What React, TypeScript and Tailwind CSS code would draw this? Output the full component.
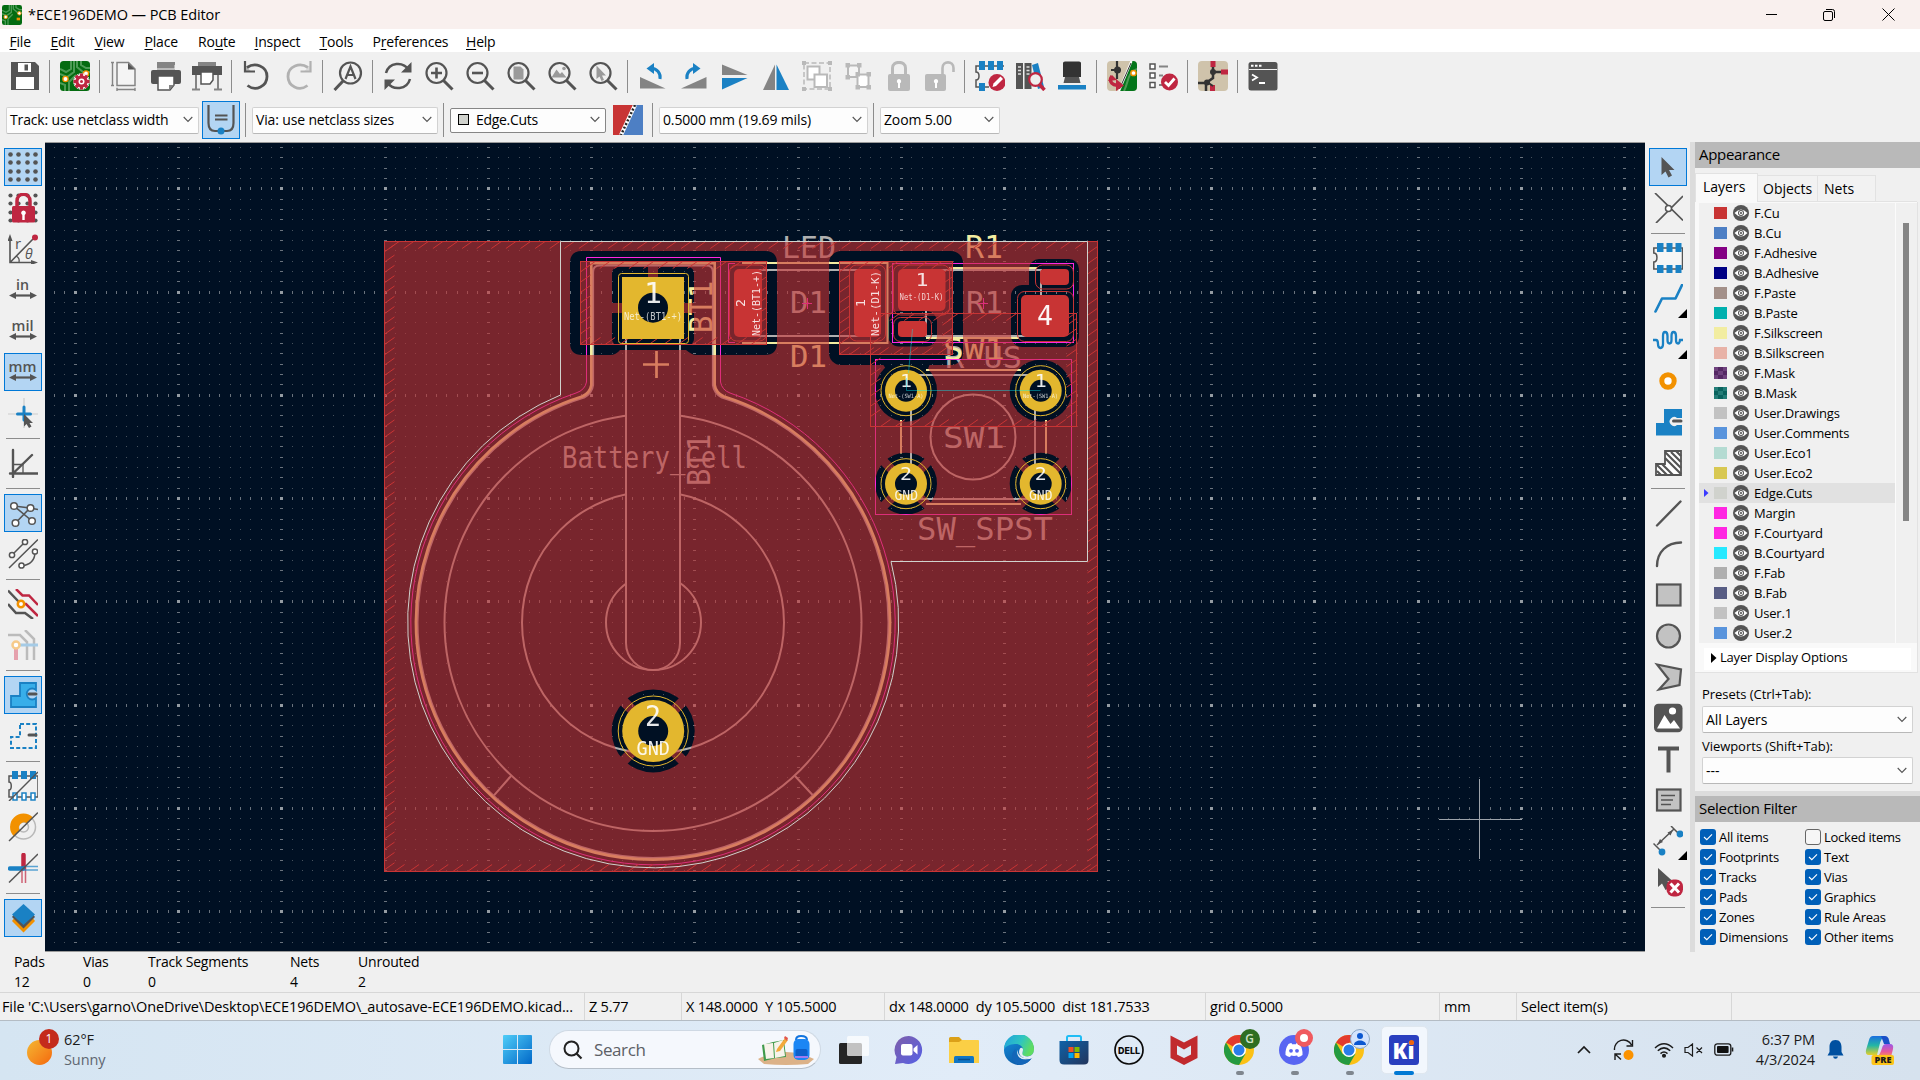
import React from "react";

const G = "#545454";
const B = "#1a81c4";
const R = "#bf2641";
const O = "#f29100";

/* ---------- shared pieces ---------- */

function Ico({ children, dim }: { children: React.ReactNode; dim?: boolean }) {
  return (
    <svg width="30" height="30" viewBox="0 0 30 30" fill="none" className={dim ? "block opacity-40" : "block"}>
      {children}
    </svg>
  );
}

function Chevron() {
  return (
    <svg width="10" height="7" viewBox="0 0 10 7" fill="none" className="shrink-0">
      <path d="M.7 1 5 5.4 9.3 1" stroke="#555" strokeWidth="1.1" />
    </svg>
  );
}

function PcbTile() {
  return (
    <g>
      <rect x="0" y="0" width="30" height="30" rx="3.5" fill="#046b10" />
      <path d="M0 8 6 11 11 8V0M0 13 7 16 14 11V0M17 0V6L23 11H30M21 0V4L26 7H30M0 22 5 24V30M9 30V21L16 14" stroke="#4d9b55" strokeWidth="2" fill="none" />
      <circle cx="5.5" cy="18" r="2.6" fill="#fff" stroke={O} strokeWidth="1.4" />
      <circle cx="26" cy="12.5" r="2.6" fill="#fff" stroke={O} strokeWidth="1.4" />
    </g>
  );
}

function Magnifier({ children }: { children?: React.ReactNode }) {
  return (
    <Ico>
      <circle cx="12.5" cy="12" r="10" stroke={G} strokeWidth="2.2" />
      <path d="m19.5 19.5 9 9" stroke={G} strokeWidth="3" />
      {children}
    </Ico>
  );
}

/* ---------- top toolbar icons ---------- */

const topIcons: (React.ReactNode | null)[] = [
  <Ico>
    <path d="M1 1H25L29 5V29H1Z" fill={G} />
    <rect x="7" y="1" width="15" height="11" fill="#f0f0f0" />
    <rect x="7.5" y="1.5" width="14" height="10" fill="#fff" stroke={G} />
    <rect x="14.5" y="3.5" width="3.5" height="6" fill={G} />
    <rect x="6" y="16" width="18" height="12" fill="#fff" />
  </Ico>,
  null,
  <Ico>
    <PcbTile />
    <path d="M21.5 12.5v16M13.5 20.5h16M15.8 14.8l11.4 11.4M27.2 14.8 15.8 26.2" stroke="#fff" strokeWidth="5.4" />
    <path d="M21.5 12.5v16M13.5 20.5h16M15.8 14.8l11.4 11.4M27.2 14.8 15.8 26.2" stroke={R} strokeWidth="3.4" />
    <circle cx="21.5" cy="20.5" r="6" fill={R} />
    <circle cx="21.5" cy="20.5" r="3" fill="#fff" />
    <circle cx="21.5" cy="20.5" r="1.5" fill={R} />
  </Ico>,
  null,
  <Ico>
    <path d="M7 1.5H18.5L25 8V24.5H7Z" fill="#f4f4f4" stroke="#848484" strokeWidth="1.5" />
    <path d="M18 2V8.5H25Z" fill={G} />
    <path d="M1 1.5H4M1 24.5H4M2.5 2V24M7 28.5H25M7 26.8V30M25 26.8V30" stroke="#848484" strokeWidth="1.4" />
  </Ico>,
  <Ico>
    <rect x="6" y="1" width="18" height="9" fill="#848484" />
    <path d="M6 8H24V4" stroke="#f0f0f0" strokeWidth="1" />
    <rect x="0" y="9" width="30" height="14" rx="2" fill={G} />
    <path d="M7 15H23V24L19 29H7Z" fill="#fff" stroke={G} strokeWidth="1.5" />
    <path d="M18 29V24H23Z" fill="#848484" />
  </Ico>,
  <Ico>
    <rect x="6" y="1" width="18" height="5" fill="#848484" />
    <rect x="0" y="5" width="30" height="9" fill={G} />
    <path d="M9 11H21V19L18 23H9Z" fill="#fff" stroke={G} strokeWidth="1.5" />
    <path d="M4 14V28M26 14V28M0 28.5H8M22 28.5H30" stroke="#848484" strokeWidth="2" />
  </Ico>,
  null,
  <Ico>
    <path d="M5 6.5C13 1 25 5 25 15.500C25 25 14 31 5.500 24.500" stroke={G} strokeWidth="2.800" />
    <path d="M3 0V10.500H13" stroke={G} strokeWidth="2.200" />
    <path d="M3 4V10.500H9Z" fill={G} opacity=".35" />
  </Ico>,
  <Ico dim>
    <path d="M25 6.5C17 1 5 5 5 15.500C5 25 16 31 24.500 24.500" stroke={G} strokeWidth="2.800" />
    <path d="M27.500 0V10.500H17.500" stroke={G} strokeWidth="2.200" />
    <path d="M27.500 4V10.500H21Z" fill={G} opacity=".35" />
  </Ico>,
  null,
  <Ico>
    <circle cx="17.500" cy="12" r="10.500" stroke={G} strokeWidth="2.200" />
    <path d="m10.500 19.500-9 9.500" stroke={G} strokeWidth="3" />
    <path d="M12.500 18 17.500 5.500 22.500 18M14.500 14H20.500" stroke={G} strokeWidth="2.200" />
  </Ico>,
  null,
  <Ico>
    <path d="M3 12C6 1 20 0 26 9M27 18C24 29 10 30 4 21" stroke={G} strokeWidth="2.500" />
    <path d="M28.500 1V11.500H18ZM1.500 29V18.500H12Z" fill={G} />
  </Ico>,
  <Magnifier>
    <path d="M12.500 6.500V17.500M7 12H18" stroke={G} strokeWidth="2.600" />
  </Magnifier>,
  <Magnifier>
    <path d="M7 12H18" stroke={G} strokeWidth="2.600" />
  </Magnifier>,
  <Magnifier>
    <path d="M7.500 5.500H14.500L17.500 8.500V18.500H7.500Z" fill="#9a9a9a" />
  </Magnifier>,
  <Magnifier>
    <path d="M4.500 16.500 9.500 8.500 13 13 15 11 19.500 16.500Z" fill="#9a9a9a" />
    <circle cx="17" cy="7.500" r="1.800" fill="#9a9a9a" />
  </Magnifier>,
  <Magnifier>
    <path d="M8.500 4.500V18L11.500 15.500 13.500 20 16 19 14 14.500H18Z" fill="#9a9a9a" />
  </Magnifier>,
  null,
  <Ico>
    <path d="M2 16V27.500H27.500Z" fill="#848484" />
    <path d="M22 18C23 12 19 7.500 13 7" stroke={B} strokeWidth="3" />
    <path d="M16 2V13L8.500 7.500Z" fill={B} />
  </Ico>,
  <Ico>
    <path d="M27.500 16V27.500H2Z" fill="#848484" />
    <path d="M8 18C7 12 11 7.500 17 7" stroke={B} strokeWidth="3" />
    <path d="M14 2V13L21.500 7.500Z" fill={B} />
  </Ico>,
  <Ico>
    <path d="M2 3.500V14H27.500Z" fill="#848484" />
    <path d="M2 28.500V17H27.500Z" fill={B} />
  </Ico>,
  <Ico>
    <path d="M14 3.500V29H2Z" fill="#848484" />
    <path d="M15.500 3.500V29H28Z" fill={B} />
  </Ico>,
  <Ico>
    <g stroke="#b9b9b9">
      <path d="M2 2H28V28H2Z" strokeWidth="1.500" strokeDasharray="5 2.500" />
      <path d="M5.500 5.500H17.500V18.500H5.500Z" fill="#fff" strokeWidth="2" />
      <path d="M12.500 13.500H25V26H12.500Z" fill="#fff" strokeWidth="2" />
    </g>
    <path d="M0 0H4V4H0ZM26 0H30V4H26ZM0 26H4V30H0ZM26 26H30V30H26Z" fill="#b9b9b9" />
  </Ico>,
  <Ico>
    <g stroke="#b9b9b9" strokeWidth="2">
      <path d="M5 4.500H16V16H5Z" fill="#f5f5f5" />
      <path d="M14.500 13.500H25.500V26H14.500Z" fill="#fff" />
    </g>
    <path d="M2.500 2H7V6.500H2.500ZM14 2H18.500V6.500H14ZM2.500 14H7V18.500H2.500ZM12.500 11H17V15.500H12.500ZM23.500 11H28V15.500H23.500ZM12.500 24H17V28.500H12.500ZM23.500 24H28V28.500H23.500Z" fill="#b9b9b9" />
  </Ico>,
  <Ico>
    <path d="M8.500 14V7C8.500-.5 21.500-.5 21.500 7V14" stroke="#b9b9b9" strokeWidth="3" />
    <rect x="4" y="13" width="22" height="17" rx="2" fill="#b9b9b9" />
    <path d="M15 18a2.300 2.300 0 0 1 1 4.300V27H14V22.300A2.300 2.300 0 0 1 15 18Z" fill="#fff" />
  </Ico>,
  <Ico>
    <path d="M17.500 14V7C17.500-.5 28.500-.5 28.500 7V11" stroke="#b9b9b9" strokeWidth="2.600" />
    <rect x="0" y="13" width="21" height="17" rx="2" fill="#b9b9b9" />
    <path d="M11 18a2.300 2.300 0 0 1 1 4.300V27H10V22.300A2.300 2.300 0 0 1 11 18Z" fill="#fff" />
  </Ico>,
  null,
  <Ico>
    <path d="M29 5H1V11C5 11 5 19 1 19V26H14" stroke={G} strokeWidth="1.500" />
    <path d="M4 0H10V9H4ZM13 0H19V9H13ZM22 0H28V9H22ZM4 22H10V30H4Z" fill={B} />
    <circle cx="22" cy="21.500" r="8.500" fill={R} />
    <path d="m17.500 26 1-3.500 7-7 2.500 2.500-7 7Z" fill="#fff" />
  </Ico>,
  <Ico>
    <path d="M0 2H7V28H0ZM8.500 2H15.500V28H8.500Z" fill={G} />
    <path d="m16 4 6-2 6 24-6 2Z" fill={B} />
    <path d="M2 6H5M2 9.500H5M2 13H5M10.500 6H13.500M10.500 9.500H13.500M10.500 13H13.500" stroke="#ddd" strokeWidth="1.300" />
    <circle cx="19.500" cy="18.500" r="6.300" fill="#eee" stroke={R} strokeWidth="2.200" />
    <path d="m23.500 23.500 5 5.500" stroke={R} strokeWidth="3.500" />
  </Ico>,
  <Ico>
    <path d="M6 2Q6 .5 8 .5H22Q24 .5 24 2V16H6Z" fill="#333" />
    <path d="M8 16H22L23.500 22H6.500Z" fill={G} />
    <rect x="1" y="24" width="28" height="4.500" fill={B} />
  </Ico>,
  null,
  <Ico>
    <rect width="30" height="30" rx="4" fill="#cfc3ab" />
    <path d="M25 0H26Q30 0 30 4V26Q30 30 26 30H12Z" fill="#04751a" />
    <path d="M17 30C22 20 20 12 30 8" stroke="#4d9b55" strokeWidth="2" />
    <path d="M10 0V18M4 9H14" stroke="#333" strokeWidth="2.200" />
    <circle cx="10.500" cy="9" r="3.500" fill="#333" />
    <path d="M24.500 0 12 30" stroke="#fff" strokeWidth="2.200" />
    <path d="M24 2 12.500 28" stroke="#333" strokeWidth="1" />
    <circle cx="26.500" cy="12" r="2.600" fill="#fff" stroke={O} strokeWidth="1.500" />
    <path d="M5 15C1 21 6 25 12 24" stroke={R} strokeWidth="3.500" />
    <path d="M9 18 17 24.500 9 30Z" fill={R} />
    <path d="M1 20 5 14 10 19Z" fill={R} />
  </Ico>,
  <Ico>
    <g stroke={G} strokeWidth="1.500" fill="#fff">
      <rect x="2" y="3" width="5" height="5" />
      <rect x="2" y="12" width="5" height="5" />
      <rect x="2" y="21.500" width="5" height="5" />
    </g>
    <path d="M11 5.500H20M11 14.500H15M11 24H14" stroke="#848484" strokeWidth="1.800" />
    <circle cx="21.500" cy="21" r="8.500" fill={R} />
    <path d="m17 21 3.500 3.500 6-7" stroke="#fff" strokeWidth="2.800" />
  </Ico>,
  null,
  <Ico>
    <rect width="30" height="30" rx="4" fill="#cfc3ab" />
    <path d="M15 0V10M15 10V17L8 22V30M0 22H8M15 11H24" stroke="#333" strokeWidth="2.500" />
    <path d="M12.500 0H17.500V6H12.500ZM23 8.500H30V13.500H23ZM12 24H17V30H12Z" fill={R} />
    <circle cx="15" cy="11" r="3" fill="#333" />
    <circle cx="9" cy="21.500" r="3" fill="#333" />
    <path d="M9 21 15 25" stroke="#333" strokeWidth="2" />
  </Ico>,
  null,
  <Ico>
    <rect x=".5" y="1" width="29" height="28.500" rx="2.500" fill={G} />
    <path d="M1 8.500H29" stroke="#f0f0f0" strokeWidth="1" />
    <path d="M3 4.800H5.500M7 4.800H9.500M11 4.800H13.500" stroke="#fff" strokeWidth="2" />
    <path d="M4 13.500 9 16.500 4 19.500M11 22H17" stroke="#fff" strokeWidth="1.800" />
  </Ico>,
];

/* ---------- left toolbar icons ---------- */

const lattice = [3, 11, 20, 28];

function HArrow({ y }: { y: number }) {
  return (
    <g>
      <path d={`M6 ${y}H24`} stroke={G} strokeWidth="2.200" />
      <path d={`M1 ${y}L8 ${y - 3.5}V${y + 3.5}ZM29 ${y}L22 ${y - 3.5}V${y + 3.5}Z`} fill={G} />
    </g>
  );
}

function UnitIcon({ label, w }: { label: string; w: number }) {
  return (
    <Ico>
      <text x="14.5" y="14.500" textAnchor="middle" textLength={w} lengthAdjust="spacingAndGlyphs" fontFamily="Open Sans" fontWeight="600" fontSize="15" fill={G}>
        {label}
      </text>
      <HArrow y={20.5} />
    </Ico>
  );
}

type Tool = { on?: boolean; icon: React.ReactNode; more?: boolean } | null;

const leftTools: Tool[] = [
  { on: true, icon: <Ico>{lattice.map((y) => lattice.map((x) => <circle key={`${x}-${y}`} cx={x - 0.5} cy={y - 0.5} r="2.300" fill={G} />))}</Ico> },
  {
    icon: (
      <Ico>
        {lattice.map((y) => lattice.map((x) => <circle key={`${x}-${y}`} cx={x - 0.5} cy={y - 0.5} r="2.100" fill={G} />))}
        <path d="M9 14V8C9-1 22-1 22 8V14" stroke={R} strokeWidth="3.500" />
        <rect x="4" y="13" width="23" height="16.500" rx="1.500" fill={R} />
        <path d="M15.500 17.500a2.500 2.500 0 0 1 1.200 4.600V27H14.300V22.100A2.500 2.500 0 0 1 15.500 17.500Z" fill="#fff" />
      </Ico>
    ),
  },
  {
    icon: (
      <Ico>
        <path d="M2 5V28.500H26M2 28.500 25 5" stroke={G} strokeWidth="1.600" />
        <path d="M2 0 4.500 7H-.5ZM30 28.500 23 26V31Z" fill={G} />
        <circle cx="27" cy="3.500" r="3" fill={R} />
        <path d="M8 22Q12 24 11 28" stroke={G} strokeWidth="1.300" />
        <text x="7" y="15" fontFamily="Open Sans" fontSize="15" fill={G}>r</text>
        <text x="17" y="25" fontFamily="Open Sans" fontStyle="italic" fontSize="14" fill={G}>θ</text>
      </Ico>
    ),
  },
  { icon: <UnitIcon label="in" w={13} /> },
  { icon: <UnitIcon label="mil" w={22} /> },
  { on: true, icon: <UnitIcon label="mm" w={28} /> },
  {
    icon: (
      <Ico>
        <path d="M16 0V30M0 16H30" stroke="#ccc" strokeWidth="1.200" />
        <path d="M16 9V22M9.500 16H22.500" stroke={B} strokeWidth="3" strokeLinecap="round" />
        <path d="M16 16V28.500L18.500 26 21 30 23.500 28.500 21.500 25H25Z" fill={G} />
      </Ico>
    ),
  },
  null,
  {
    icon: (
      <Ico>
        <path d="M5 2V29M2 25.500H29.500M5 25.500 24 7" stroke={G} strokeWidth="2.400" strokeLinecap="round" />
        <path d="M5 16.500H15V25" stroke={G} strokeWidth="1.300" />
      </Ico>
    ),
  },
  null,
  {
    on: true,
    icon: (
      <Ico>
        <path d="M6 8 24 23M6 8 22 10 30 11.500M22 10 7.500 25" stroke={G} strokeWidth="1.600" />
        <g fill="#fff" stroke={G} strokeWidth="1.500">
          <circle cx="6" cy="8" r="3.300" />
          <circle cx="22.500" cy="10" r="3.300" />
          <circle cx="7.500" cy="25" r="3.300" />
          <circle cx="24" cy="23" r="3.300" />
        </g>
      </Ico>
    ),
  },
  {
    icon: (
      <Ico>
        <path d="M1 29 30 .5M4 16 17 3M13 27C22 26 27 22 27 13" stroke={G} strokeWidth="1.500" />
        <g fill="#fff" stroke={G} strokeWidth="1.500">
          <circle cx="4" cy="16" r="2.600" />
          <circle cx="17" cy="3" r="2.600" />
          <circle cx="13.500" cy="26.500" r="2.600" />
          <circle cx="27" cy="12.500" r="2.600" />
        </g>
      </Ico>
    ),
  },
  null,
  {
    icon: (
      <Ico>
        <path d="M0 1.500 11 13M0 15 8 24H17L25 30" stroke={G} strokeWidth="2.500" />
        <path d="M8 0 14.500 6.500H21L30 16M13 15H18L30 27" stroke={R} strokeWidth="2.500" />
        <circle cx="13" cy="15" r="3.200" fill="#fff" stroke={O} strokeWidth="2.500" />
      </Ico>
    ),
  },
  {
    icon: (
      <Ico>
        <path d="M0 5H12L19 12V30M17 0 26 9V30" stroke="#bbb" strokeWidth="2.500" />
        <path d="M8 15V30" stroke="#e5a0ac" strokeWidth="4" />
        <path d="M8 15H30" stroke="#a5cbe6" strokeWidth="3" />
        <circle cx="8" cy="15" r="3.500" fill="#fff" stroke="#f6ca8a" strokeWidth="2.500" />
      </Ico>
    ),
  },
  null,
  {
    on: true,
    icon: (
      <Ico>
        <path d="M12 3H28V10A5.500 5.500 0 1 0 28 18V27H3V16H12Z" fill="#38aee9" stroke={B} strokeWidth="1.800" />
        <path d="M21 14H28" stroke={G} strokeWidth="3" strokeLinecap="round" />
      </Ico>
    ),
  },
  {
    icon: (
      <Ico>
        <path d="M12 3H28V27H3V16H12Z" stroke={B} strokeWidth="2" strokeDasharray="4 2.200" />
        <path d="M21 14H28" stroke={G} strokeWidth="3" strokeLinecap="round" />
      </Ico>
    ),
  },
  null,
  {
    icon: (
      <Ico>
        <path d="M30 5H1V11C4 11 4 19 1 19V26H30Z" stroke={G} strokeWidth="1.500" />
        <path d="M4 0H10V8H4ZM13 0H19V8H13ZM22 0H28V8H22Z" fill={B} />
        <path d="M5 22H9V29H5ZM14 22H18V29H14ZM23 22H27V29H23Z" fill="#fff" stroke={B} strokeWidth="1.500" />
        <path d="M1 30 30 1" stroke={G} strokeWidth="1.500" />
      </Ico>
    ),
  },
  {
    icon: (
      <Ico>
        <circle cx="15.500" cy="15" r="12" stroke="#b9b9b9" strokeWidth="1.500" />
        <circle cx="15.500" cy="15" r="5" stroke="#b9b9b9" strokeWidth="1.500" />
        <path d="M6 24.500A12.500 12.500 0 0 1 25 5.500L19 11.500A5 5 0 0 0 12 18.500Z" fill={O} />
        <path d="M1 29 30 .5" stroke={G} strokeWidth="1.500" />
      </Ico>
    ),
  },
  {
    icon: (
      <Ico>
        <path d="M15.500 2V15" stroke={R} strokeWidth="4.500" strokeLinecap="round" />
        <path d="M2 15.500H15" stroke={B} strokeWidth="4.500" strokeLinecap="round" />
        <path d="M14 16V30M17.500 14V30" stroke={R} strokeWidth="1.500" opacity=".7" />
        <path d="M15 13.500H30M14 17H30" stroke={B} strokeWidth="1.500" opacity=".7" />
        <path d="M1 29.500 30 1" stroke={G} strokeWidth="1.500" />
      </Ico>
    ),
  },
  null,
  {
    on: true,
    icon: (
      <Ico>
        <path d="M4 18 15.500 29.500 27 18 24 14 15.500 22 7 14Z" fill={O} />
        <path d="M4 14 15.500 25.500 27 14 24 10H7Z" fill={G} />
        <path d="M15.500 1 27 11.500 15.500 22 4 11.500Z" fill={B} />
      </Ico>
    ),
  },
];

/* ---------- right toolbar icons ---------- */

const rightTools: Tool[] = [
  { on: true, icon: <Ico><path d="M8.500 5V23L12.500 19.500 15.500 25.500 19 23.500 16 18H21.500Z" fill={G} /></Ico> },
  {
    icon: (
      <Ico>
        <path d="M2 0 30 27.500M30 3 3 30" stroke={G} strokeWidth="1.700" />
        <circle cx="15.500" cy="15.500" r="3" fill="#fff" stroke={G} strokeWidth="1.500" />
      </Ico>
    ),
  },
  null,
  {
    icon: (
      <Ico>
        <path d="M29.500 5H.8V10C5 10 5 19 .8 19V26H29.500Z" stroke={G} strokeWidth="1.500" fill="#f6f6f6" />
        <path d="M4 0H10.500V9H4ZM13.500 0H19.500V9H13.500ZM22.500 0H28.500V9H22.500ZM4 22H10.500V30H4ZM13.500 22H19.500V30H13.500ZM22.500 22H28.500V30H22.500Z" fill={B} />
      </Ico>
    ),
  },
  { more: true, icon: <Ico><path d="M2.500 27.500 9 14.500H22.500L29 1" stroke={B} strokeWidth="2.600" strokeLinecap="round" strokeLinejoin="round" /></Ico> },
  {
    more: true,
    icon: (
      <Ico>
        <path d="M0 15H3Q5 15 5 19Q5 23 7.500 23Q10 23 10 19V11Q10 7 12 7Q14.500 7 14.500 11V15Q14.500 18.500 16.500 18.500Q18.500 18.500 18.500 15V11Q18.500 7 20.500 7Q23 7 23 11V15Q23 18.500 25 18.500Q26.500 18.500 27 15H30" stroke={B} strokeWidth="2.300" />
      </Ico>
    ),
  },
  { icon: <Ico><circle cx="15" cy="15" r="6.200" fill="#fff" stroke={O} strokeWidth="5" /></Ico> },
  {
    icon: (
      <Ico>
        <path d="M11 2H29V11H24A4.500 4.500 0 1 0 24 18H29V28.500H3V16H11Z" fill={B} />
        <path d="M20.500 14H28" stroke={G} strokeWidth="3" strokeLinecap="round" />
      </Ico>
    ),
  },
  {
    icon: (
      <Ico>
        <path d="M12 3H28V27H3V16H12Z" fill="#fff" stroke={G} strokeWidth="1.800" />
        <path d="M12 4 28 20M18 4 28 14M23 3 28 8M12 10 28 26M9 16 20 27M4 17 14 27M4 23 8 27" stroke={G} strokeWidth="2.200" />
      </Ico>
    ),
  },
  null,
  { icon: <Ico><path d="M4 27.500 27.500 3.500" stroke={G} strokeWidth="2.400" strokeLinecap="round" /></Ico> },
  { icon: <Ico><path d="M4 27C4 13 14 3.500 28 3.500" stroke={G} strokeWidth="2.400" strokeLinecap="round" /></Ico> },
  { icon: <Ico><rect x="4" y="4.500" width="23.500" height="21" fill="#c2c2c2" stroke={G} strokeWidth="2.200" /></Ico> },
  { icon: <Ico><circle cx="15.500" cy="15" r="11.500" fill="#c2c2c2" stroke={G} strokeWidth="2.200" /></Ico> },
  { icon: <Ico><path d="M4 2.500 28 7.500 26.500 23 6 27.500 15.500 17Z" fill="#c2c2c2" stroke={G} strokeWidth="2.200" /></Ico> },
  {
    icon: (
      <Ico>
        <rect x="1" y=".8" width="28.500" height="28.500" rx="4.500" fill={G} />
        <path d="M4 25.500 11.500 12 17.500 21 21 17 27 25.500Z" fill="#fff" />
        <circle cx="19.500" cy="8" r="3.600" fill="#fff" />
      </Ico>
    ),
  },
  { icon: <Ico><path d="M5 4.500H26M15.500 4.500V28.500" stroke={G} strokeWidth="4" /></Ico> },
  {
    icon: (
      <Ico>
        <rect x="4" y="4.500" width="23.500" height="21" fill="#c2c2c2" stroke={G} strokeWidth="2.200" />
        <path d="M8 10.500H22M8 15H20M8 19.500H18" stroke={G} strokeWidth="1.500" />
      </Ico>
    ),
  },
  {
    more: true,
    icon: (
      <Ico>
        <path d="M18 0 26 8M.5 17.500 9 26M4 19 21 3" stroke={G} strokeWidth="1.500" />
        <path d="M20 4 14.500 6.500 17.500 9.500ZM4.500 18.500 10 16 7 13Z" fill={G} />
        <circle cx="27" cy="8" r="3.400" fill={B} />
        <circle cx="9" cy="26" r="3.400" fill={B} />
      </Ico>
    ),
  },
  {
    icon: (
      <Ico>
        <path d="M5 1V20L9 16.500 12.500 23 17 20 14.500 14H19.500Z" fill={G} />
        <rect x="13.500" y="12.500" width="16.500" height="17" rx="7" fill={R} />
        <path d="m17.500 16.500 8.500 9M26 16.500 17.500 25.500" stroke="#fff" strokeWidth="3" />
      </Ico>
    ),
  },
  null,
];

function ToolColumn({ tools }: { tools: Tool[] }) {
  return (
    <div className="flex w-[45px] shrink-0 flex-col items-center bg-[#f0f0f0] pt-[4.5px]">
      {tools.map((t, i) =>
        t ? (
          <div key={i} className="flex h-[41px] w-full items-center justify-center">
            <div className={t.on ? "relative flex size-[38px] items-center justify-center border border-[#0078d7] bg-[#b3d5f3]" : "relative flex size-[38px] items-center justify-center"}>
              {t.icon}
              {t.more && (
                <svg width="9" height="9" className="absolute right-0 bottom-0">
                  <path d="M9 0V9H0Z" fill="#000" />
                </svg>
              )}
            </div>
          </div>
        ) : (
          <div key={i} className="flex h-[9px] items-center">
            <div className="h-px w-[34px] bg-[#8c8c8c]" />
          </div>
        ),
      )}
    </div>
  );
}

/* ---------- board canvas ---------- */

const SILK = "#f2eda1";
const FAB = "#afafaf";
const CU = "#c83434";
const CRT = "#ff26e2";
const PAD = "#e3b72e";
const BG = "#001023";

function gridPaths() {
  let minor = "";
  let ticks = "";
  let major = "";
  const s = 10.33;
  for (let j = -5; j < 76; j++) {
    const y = Math.round(188.7 + j * s - 0.5);
    for (let i = -3; i < 153; i++) {
      const x = Math.round(75.1 + i * s - 0.5);
      const mx = i % 10 === 0;
      const my = j % 10 === 0;
      if (mx && my) major += `M${x - 1} ${y - 1}h3v3h-3z`;
      else if (my) ticks += `M${x} ${y - 1}h1v3h-1z`;
      else if (mx) ticks += `M${x - 1} ${y}h3v1h-3z`;
      else minor += `M${x} ${y}h1v1h-1z`;
    }
  }
  return { minor, ticks, major };
}

const grid = gridPaths();

function hatch(x0: number, y0: number, x1: number, y1: number) {
  let d = "";
  for (let y = y0 + 10.3; y < y1; y += 10.3) d += `M${x0} ${y}l10 -7`;
  for (let x = x0 + 10; x < x1 - 8; x += 14.6) d += `M${x} ${y1}l10 -7`;
  for (let x = x0 + 14.6; x < x1; x += 14.6) d += `M${x} ${y0}l-10 7`;
  for (let y = y0 + 5; y < y1 - 6; y += 10.3) d += `M${x1} ${y}l-10 7`;
  return d;
}

function Zone({ x0, y0, x1, y1 }: { x0: number; y0: number; x1: number; y1: number }) {
  return (
    <g stroke={CU} strokeWidth="1" fill="none">
      <rect x={x0} y={y0} width={x1 - x0} height={y1 - y0} />
      <path d={hatch(x0, y0, x1, y1)} />
    </g>
  );
}

/* Stroke-style board text: x is the left edge, y the baseline, h the cap height, w the drawn width. */
function BT({ x, y, h, w, c, v, children, o }: { x: number; y: number; h: number; w: number; c: string; v?: boolean; o?: number; children: string }) {
  return (
    <text
      x={0}
      y={0}
      transform={v ? `translate(${x} ${y}) rotate(-90)` : `translate(${x} ${y})`}
      fill={c}
      opacity={o}
      fontFamily="DejaVu Sans Mono"
      fontSize={h / 0.729}
      textLength={w}
      lengthAdjust="spacingAndGlyphs"
    >
      {children}
    </text>
  );
}

function RoundPad({ x, y, r, hole, ring }: { x: number; y: number; r: number; hole: number; ring: number }) {
  return (
    <g>
      <circle cx={x} cy={y} r={r} fill={PAD} />
      <circle cx={x} cy={y} r={hole} fill={BG} />
      <circle cx={x} cy={y} r={ring} fill="none" stroke={PAD} strokeWidth="1" />
    </g>
  );
}

function Relief({ x, y, r, w }: { x: number; y: number; r: number; w: number }) {
  const k = (r + 3) * 0.707;
  return (
    <g>
      <circle cx={x} cy={y} r={r} fill="#000" />
      <path d={`M${x - k} ${y - k}L${x + k} ${y + k}M${x + k} ${y - k}L${x - k} ${y + k}`} stroke="#fff" strokeWidth={w} />
    </g>
  );
}

function Board() {
  return (
    <svg width="1600" height="808" viewBox="45 143 1600 808" className="block bg-[#001023]">
      <defs>
        <mask id="fill" maskUnits="userSpaceOnUse" x="380" y="238" width="722" height="638">
          <rect x="384" y="241" width="714" height="630.500" fill="#fff" />
          <path d="M582 251H765Q777 251 777 263V343Q777 355 765 355H696Q692 355 686 350H620Q616 355 610 355H582Q570 355 570 343V263Q570 251 582 251Z" fill="#000" />
          <rect x="829" y="251" width="134" height="114" rx="12" fill="#000" />
          <path d="M880 362H932Q926 368 930 372H884Q888 368 880 362Z" fill="#000" />
          <rect x="580.500" y="261.500" width="186" height="83" fill="#fff" />
          <rect x="839" y="261.500" width="113.500" height="93" fill="#fff" />
          <rect x="612" y="267" width="82" height="78" rx="6" fill="#000" />
          <path d="M611 308H695M653 266V277" stroke="#fff" strokeWidth="10" />
          <rect x="888" y="311" width="49" height="35.500" rx="11" fill="#000" />
          <rect x="1029" y="259" width="50" height="40" rx="10" fill="#000" />
          <rect x="1011" y="285" width="68" height="62" rx="11" fill="#000" />
          <circle cx="906" cy="390.700" r="31" fill="#000" />
          <circle cx="1040.700" cy="390.700" r="31" fill="#000" />
          <Relief x={906} y={483.7} r={31} w={9} />
          <Relief x={1040.7} y={483.7} r={31} w={9} />
          <Relief x={653.2} y={731} r={41.5} w={10} />
        </mask>
        <clipPath id="slotL">
          <path d="M400 380H626V780H400ZM680 380H910V780H680ZM400 640H910V900H400Z" />
        </clipPath>
      </defs>

      <g shapeRendering="crispEdges">
        <path d={grid.minor} fill="#46515c" />
        <path d={grid.ticks} fill="#6a737d" />
        <path d={grid.major} fill="#959ca3" />
      </g>

      {/* fabrication layer */}
      <g stroke={FAB} strokeWidth="2" fill="none">
        <path d="M593 385V272Q593 265.500 600 265.500H706Q713 265.500 713 272V385Q714 393 722 397.500A235.500 235.500 0 1 1 584 397.500Q592 393 593 385Z" strokeWidth="2.200" />
        <g clipPath="url(#slotL)">
          <circle cx="653" cy="622.500" r="208.500" />
          <circle cx="653" cy="622.500" r="131" />
          <circle cx="653.500" cy="622.500" r="47.500" />
        </g>
        <path d="M626 339V643A27 27 0 0 0 680 643V339M494 795.300 511 776M795 776 812.800 795.300" />
        <path d="M742 270H872M742 336H872" />
        <rect x="926" y="270" width="115" height="66" />
        <rect x="911" y="375" width="124" height="124" />
        <circle cx="973" cy="437" r="42.500" />
      </g>
      <BT x={782} y={258} h={22} w={54} c={FAB}>LED</BT>
      <BT x={790} y={313} h={22} w={37} c={FAB}>D1</BT>
      <BT x={966} y={313} h={22} w={37} c={FAB}>R1</BT>
      <BT x={945} y={368} h={22} w={77} c={FAB}>R_US</BT>
      <BT x={943} y={448} h={22.5} w={62} c={FAB}>SW1</BT>
      <BT x={917} y={540} h={23} w={136} c={FAB}>SW_SPST</BT>
      <BT x={710} y={486} h={23} w={52} c={FAB} v>BT1</BT>
      <BT x={562} y={467.5} h={22} w={185} c={FAB}>Battery_Cell</BT>

      {/* silkscreen */}
      <g stroke={SILK} strokeWidth="2" fill="none">
        <path d="M591.300 385V263.300H714.700V385Q716 393 724 396.500A237 237 0 1 1 582 396.500Q590 393 591.300 385Z" strokeWidth="2.600" />
        <path d="M742 263H887.500V343H742" />
        <path d="M949 268H1037M926 338H1019" />
        <path d="M926 370H1021M926 504H1021M901 420V453.500M1046 420V453.500" />
        <path d="M643 364.500H669M656.500 351V378" strokeWidth="2.700" />
      </g>
      <BT x={965} y={258} h={23} w={38} c={SILK}>R1</BT>
      <BT x={790} y={367} h={22} w={37} c={SILK}>D1</BT>
      <BT x={943} y={359.5} h={22.5} w={62} c={SILK}>SW1</BT>
      <BT x={712} y={333} h={23} w={52} c={SILK} v>BT1</BT>

      {/* courtyards */}
      <g stroke={CRT} strokeWidth="1" fill="none">
        <path d="M586.500 257.500H720.500V382Q722 390 730 393A242.200 242.200 0 1 1 576 393Q585 390 586.500 382Z" />
        <path d="M735 263.500H728.500V342.500H735" />
        <rect x="892.500" y="263.500" width="181" height="79" />
        <rect x="875.500" y="359.500" width="196" height="155" />
        <path d="M802 303.500H812M807.500 298V309M978 303.500H988M983.500 298V309" />
      </g>

      {/* copper fills */}
      <rect x="384" y="241" width="714" height="631" fill={CU} opacity=".6" mask="url(#fill)" />
      <Zone x0={384.5} y0={241.5} x1={1097.5} y1={871.5} />
      <Zone x0={580.5} y0={261.5} x1={766.5} y1={344.5} />
      <Zone x0={839.5} y0={261.5} x1={952.5} y1={354.5} />
      <Zone x0={870.5} y0={313.5} x1={1076.5} y1={426.5} />

      {/* surface pads */}
      <g fill={CU}>
        <rect x="734" y="269" width="28" height="68" rx="5" />
        <rect x="854" y="269" width="27" height="68" rx="5" />
        <rect x="898" y="269" width="47.500" height="42" rx="5" />
        <rect x="898" y="321" width="29" height="16" rx="4" />
        <rect x="1040" y="269" width="29" height="16" rx="4" />
        <rect x="1021" y="295" width="48" height="42" rx="5" />
      </g>
      <g stroke={CU} strokeWidth="1" fill="none">
        <rect x="729.500" y="265" width="37" height="76" rx="7" />
        <rect x="849.500" y="265" width="36" height="76" rx="7" />
        <rect x="893.500" y="265" width="56" height="50" rx="7" />
        <rect x="893.500" y="317.500" width="38" height="24" rx="7" />
        <rect x="1035.500" y="265" width="38" height="24" rx="7" />
        <rect x="1017.500" y="291.500" width="56" height="50" rx="7" />
      </g>

      {/* through-hole pads */}
      <rect x="622" y="277" width="62" height="62" fill={PAD} />
      <circle cx="653" cy="307.700" r="15" fill={BG} />
      <rect x="618.500" y="273.500" width="70" height="70" rx="3" fill="none" stroke={PAD} />
      <RoundPad x={653.2} y={731} r={31} hole={15} ring={35} />
      <RoundPad x={906} y={390.7} r={21} hole={11} ring={25} />
      <RoundPad x={1040.7} y={390.7} r={21} hole={11} ring={25} />
      <RoundPad x={906} y={483.7} r={21} hole={11} ring={25} />
      <RoundPad x={1040.7} y={483.7} r={21} hole={11} ring={25} />

      {/* pad labels */}
      <BT x={644} y={302.5} h={21} w={18} c="#fff" o={0.9}>1</BT>
      <BT x={624} y={320} h={7} w={58} c="#fff" o={0.75}>Net-(BT1-+)</BT>
      <BT x={745} y={307} h={8.5} w={8} c="#fff" o={0.85} v>2</BT>
      <BT x={759.5} y={336} h={7.5} w={66} c="#fff" o={0.85} v>Net-(BT1-+)</BT>
      <BT x={865} y={307} h={8.5} w={8} c="#fff" o={0.85} v>1</BT>
      <BT x={879} y={336} h={7.5} w={65} c="#fff" o={0.85} v>Net-(D1-K)</BT>
      <BT x={915.5} y={286} h={13.5} w={13} c="#fff" o={0.85}>1</BT>
      <BT x={899.5} y={300} h={6.5} w={44} c="#fff" o={0.75}>Net-(D1-K)</BT>
      <BT x={1037} y={325} h={19.5} w={16} c="#fff" o={0.95}>4</BT>
      <BT x={900} y={387} h={13.5} w={12} c="#fff" o={0.9}>1</BT>
      <BT x={1034.7} y={387} h={13.5} w={12} c="#fff" o={0.9}>1</BT>
      <BT x={888.5} y={398} h={4.2} w={35} c="#fff" o={0.75}>Net-(SW1-A)</BT>
      <BT x={1023} y={398} h={4.2} w={35} c="#fff" o={0.75}>Net-(SW1-A)</BT>
      <BT x={900} y={480} h={13.5} w={12} c="#fff" o={0.9}>2</BT>
      <BT x={1034.7} y={480} h={13.5} w={12} c="#fff" o={0.9}>2</BT>
      <BT x={894.5} y={500} h={10} w={23.5} c="#fff" o={0.85}>GND</BT>
      <BT x={1029} y={500} h={10} w={23.5} c="#fff" o={0.85}>GND</BT>
      <BT x={645} y={725.5} h={20.5} w={16} c="#fff" o={0.9}>2</BT>
      <BT x={636.5} y={755} h={14} w={33.5} c="#fff" o={0.9}>GND</BT>

      {/* airwires, board outline and cursor */}
      <path d="M912.500 329 908.500 373M906.500 378V390.500H1040.500" stroke="#00f8ff" strokeOpacity=".4" fill="none" />
      <path d="M560.500 395V241.500H1087.500V561.500H891A245.500 245.500 0 1 1 560.500 395Z" stroke="#d0d2cd" fill="none" />
      <path d="M1439 819.500H1522M1479.500 779V859" stroke="#9da3aa" />
    </svg>
  );
}

/* ---------- side panel ---------- */

const layers: [string, string][] = [
  ["F.Cu", "bg-[#c83434]"],
  ["B.Cu", "bg-[#4d7fc4]"],
  ["F.Adhesive", "bg-[#840084]"],
  ["B.Adhesive", "bg-[#000084]"],
  ["F.Paste", "bg-[#a39089]"],
  ["B.Paste", "bg-[#00b0ae]"],
  ["F.Silkscreen", "bg-[#f2eda1]"],
  ["B.Silkscreen", "bg-[#e8b2a7]"],
  ["F.Mask", "bg-[#5f2d70]"],
  ["B.Mask", "bg-[#0c6f69]"],
  ["User.Drawings", "bg-[#c2c2c2]"],
  ["User.Comments", "bg-[#5994dc]"],
  ["User.Eco1", "bg-[#b4dbd2]"],
  ["User.Eco2", "bg-[#d8c852]"],
  ["Edge.Cuts", "bg-[#d0d2cd]"],
  ["Margin", "bg-[#ff26e2]"],
  ["F.Courtyard", "bg-[#ff26e2]"],
  ["B.Courtyard", "bg-[#26e9ff]"],
  ["F.Fab", "bg-[#afafaf]"],
  ["B.Fab", "bg-[#585d84]"],
  ["User.1", "bg-[#c2c2c2]"],
  ["User.2", "bg-[#5994dc]"],
];

function Eye() {
  return (
    <svg width="16" height="16" viewBox="0 0 16 16" className="ml-[6px] shrink-0">
      <circle cx="8" cy="8" r="8" fill={G} />
      <path d="M1.500 8Q8 .8 14.500 8Q8 15.200 1.500 8Z" fill="#fff" />
      <circle cx="8" cy="8" r="3" fill={G} />
      <circle cx="8" cy="8" r="2" fill="#fff" />
      <circle cx="8" cy="8" r="1.100" fill={G} />
    </svg>
  );
}

function LayerRow({ name, color }: { name: string; color: string }) {
  const active = name === "Edge.Cuts";
  const masked = name.endsWith(".Mask");
  return (
    <div className={active ? "flex h-5 w-[196px] items-center bg-[#e1e1e1]" : "flex h-5 w-[196px] items-center"}>
      <div className="flex w-[15px] shrink-0 justify-start pl-[5px]">
        {active && (
          <svg width="5" height="8" viewBox="0 0 5 8">
            <path d="M0 0 4.500 4 0 8Z" fill="#3a3aff" />
          </svg>
        )}
      </div>
      <div className={`h-3 w-[13px] shrink-0 ${color}`}>
        {masked && <div className="grid h-full grid-cols-3 grid-rows-3">{[0, 1, 2, 3, 4, 5, 6, 7, 8].map((i) => <span key={i} className={i % 2 ? "bg-black/10" : "bg-white/10"} />)}</div>}
      </div>
      <Eye />
      <span className="ml-[5px] text-[13px] leading-none tracking-[-0.2px] whitespace-nowrap">{name}</span>
    </div>
  );
}

function Check({ label, off }: { label: string; off?: boolean }) {
  return (
    <div className="flex h-5 items-center gap-[3px]">
      <span className={off ? "flex size-4 items-center justify-center rounded-[3px] border border-[#666] bg-[#f6f6f6]" : "flex size-4 items-center justify-center rounded-[3px] bg-[#005fb8]"}>
        {!off && (
          <svg width="10" height="8" viewBox="0 0 10 8" fill="none">
            <path d="M1 4 3.800 6.700 9 1.300" stroke="#fff" strokeWidth="1.100" />
          </svg>
        )}
      </span>
      <span className="text-[13px] leading-none tracking-[-0.25px] whitespace-nowrap">{label}</span>
    </div>
  );
}

function PanelSelect({ value }: { value: string }) {
  return (
    <div className="flex h-[27px] w-[211px] items-center justify-between rounded-[2px] border border-[#d2d2d2] border-b-[#b8b8b8] bg-[#fdfdfd] pr-[5px] pb-px pl-[3px] text-[14px]">
      <span>{value}</span>
      <Chevron />
    </div>
  );
}

function SidePanel() {
  return (
    <aside className="flex w-[225px] shrink-0 flex-col bg-[#f0f0f0]">
      <div className="flex h-[26px] items-center bg-[#b9b9b9] pb-[2px] pl-[4px] text-[15px] tracking-[-0.3px]">Appearance</div>
      <div className="mt-[5px] flex h-[29px] items-end text-[14px]">
        <div className="flex h-[29px] w-[63px] items-center border-x border-t border-[#e2e2e2] bg-[#f9f9f9] pb-[4px] pl-[7px]">Layers</div>
        <div className="flex h-[27px] w-[60px] items-center border-t border-r border-b border-[#e2e2e2] bg-[#f2f2f2] pl-[5px]">Objects</div>
        <div className="flex h-[27px] w-[58px] items-center border-t border-r border-b border-[#e2e2e2] bg-[#f2f2f2] pl-[6px]">Nets</div>
        <div className="w-[41px] border-b border-[#e2e2e2]" />
      </div>
      <div className="flex h-[471px] w-[223px] flex-col border-r border-b border-[#e2e2e2] bg-[#f9f9f9] pt-[1px] pl-[4px]">
        <div className="flex h-[440px] bg-[#f0f0f0]">
          <div className="border-r border-[#fbfbfb]">
            {layers.map(([name, color]) => (
              <LayerRow key={name} name={name} color={color} />
            ))}
          </div>
          <div className="mt-5 ml-[7px] h-[298px] w-[6px] bg-[#858585]" />
        </div>
        <div className="mt-[5px] ml-[5px] flex h-[22px] w-[207px] items-center bg-white pb-[2px] pl-[7px] text-[13px] tracking-[-0.2px]">
          <svg width="6" height="10" viewBox="0 0 6 10">
            <path d="M0 0 5.500 5 0 10Z" fill="#000" />
          </svg>
          <span className="ml-[3px]">Layer Display Options</span>
        </div>
      </div>
      <div className="flex h-[118px] flex-col pt-[11px] pl-[7px] text-[13px] tracking-[-0.05px]">
        <span className="h-[22px] leading-[20px]">Presets (Ctrl+Tab):</span>
        <PanelSelect value="All Layers" />
        <span className="mt-[2px] h-[22px] leading-[22px]">Viewports (Shift+Tab):</span>
        <PanelSelect value="---" />
      </div>
      <div className="h-[5px] bg-[#dcdcdc]" />
      <div className="flex h-[26px] items-center bg-[#b9b9b9] pb-[2px] pl-[4px] text-[15px] tracking-[-0.3px]">Selection Filter</div>
      <div className="grid grid-cols-[105px_1fr] pt-[5px] pl-[5px]">
        <Check label="All items" />
        <Check label="Locked items" off />
        <Check label="Footprints" />
        <Check label="Text" />
        <Check label="Tracks" />
        <Check label="Vias" />
        <Check label="Pads" />
        <Check label="Graphics" />
        <Check label="Zones" />
        <Check label="Rule Areas" />
        <Check label="Dimensions" />
        <Check label="Other items" />
      </div>
    </aside>
  );
}

/* ---------- header rows ---------- */

const menus: [string, string, string, string][] = [
  ["", "F", "ile", "w-[41px]"],
  ["", "E", "dit", "w-[44px]"],
  ["", "V", "iew", "w-[50px]"],
  ["", "P", "lace", "w-[53.5px]"],
  ["Ro", "u", "te", "w-[56.5px]"],
  ["", "I", "nspect", "w-[65px]"],
  ["", "T", "ools", "w-[53px]"],
  ["P", "r", "eferences", "w-[93.5px]"],
  ["", "H", "elp", "w-[50px]"],
];

function Combo({ w, dark, children }: { w: string; dark?: boolean; children: React.ReactNode }) {
  return (
    <div className={`flex items-center justify-between rounded-[2px] border bg-[#fdfdfd] pr-[5px] pb-px pl-[3px] ${dark ? "h-[25px] border-[#868686]" : "h-[27px] border-[#d2d2d2] border-b-[#b8b8b8]"} ${w}`}>
      {children}
      <Chevron />
    </div>
  );
}

function VSep({ tall }: { tall?: boolean }) {
  return (
    <div className="flex w-[9px] shrink-0 justify-center">
      <div className={tall ? "h-[34px] w-px bg-[#8c8c8c]" : "h-[33px] w-px bg-[#8c8c8c]"} />
    </div>
  );
}

/* ---------- taskbar ---------- */

function Chrome() {
  return (
    <svg width="30" height="30" viewBox="0 0 30 30">
      <circle cx="15" cy="15" r="15" fill="#fbc116" />
      <path d="M15 15 2 7.500A15 15 0 0 1 28 7.500H15Z" fill="#e33b2e" />
      <path d="M2 7.500A15 15 0 0 0 15 30L21.500 18.700 8.500 18.700Z" fill="#249a41" />
      <circle cx="15" cy="15" r="7" fill="#fff" />
      <circle cx="15" cy="15" r="5.500" fill="#2a7de9" />
    </svg>
  );
}

const apps: { icon: React.ReactNode; badge?: React.ReactNode; run?: boolean; active?: boolean }[] = [
  {
    icon: (
      <svg width="30" height="30" viewBox="0 0 30 30">
        <rect x="0" y="8" width="23" height="21" rx="1.500" fill="#252525" />
        <rect x="8" y="1" width="22" height="20" rx="1.500" fill="#fff" opacity=".72" />
      </svg>
    ),
  },
  {
    icon: (
      <svg width="30" height="30" viewBox="0 0 30 30">
        <defs><linearGradient id="chat" x1="0" y1="0" x2="1" y2="1"><stop stopColor="#7f5fa9" /><stop offset="1" stopColor="#5560e6" /></linearGradient></defs>
        <path d="M15 1A14 14 0 1 1 9 28L1 29 2.500 22A14 14 0 0 1 15 1Z" fill="url(#chat)" />
        <rect x="7" y="9" width="11.500" height="11.500" rx="2" fill="#fff" />
        <path d="M19.500 13.500 23.500 10V19.500L19.500 16Z" fill="#fff" />
      </svg>
    ),
  },
  {
    icon: (
      <svg width="30" height="30" viewBox="0 0 30 30">
        <path d="M0 3.500Q0 2 1.500 2H10L13 5H15V9H0Z" fill="#dba018" />
        <path d="M0 7H10L13 5H29Q30 5 30 6V28H0Z" fill="#fbcf45" />
        <path d="M5 28V22.500Q5 21 6.500 21H23.500Q25 21 25 22.500V28Z" fill="#1176c4" />
        <path d="M9 24.500H21" stroke="#0a4f8c" strokeWidth="1.500" />
      </svg>
    ),
  },
  {
    icon: (
      <svg width="30" height="30" viewBox="0 0 30 30">
        <defs>
          <linearGradient id="eg1" x1="0" y1="0" x2="1" y2=".4"><stop stopColor="#1f9fe0" /><stop offset=".6" stopColor="#2fc5c0" /><stop offset="1" stopColor="#5fdc62" /></linearGradient>
          <linearGradient id="eg2" x1="0" y1="0" x2=".6" y2="1"><stop stopColor="#1590df" /><stop offset="1" stopColor="#0c59a4" /></linearGradient>
        </defs>
        <circle cx="15" cy="15" r="15" fill="url(#eg2)" />
        <path d="M0 14A15 15 0 0 1 30 14C30.500 20 25 22.500 20 21C16 20 19 18 19 15C19 11 15 8.500 11 9C6 9 1 12 0 14Z" fill="url(#eg1)" />
        <path d="M14 15C13 20 18 25 28 22.500C26 25 24 24.500 19 24.500C14 23 12 18 14 15Z" fill="#e4edf6" />
        <path d="M11.500 14C10 22 18 27 27.500 23.500 24 29 18 30 15 30 7 28 6 18 11.500 14Z" fill="#1366b8" />
        <path d="M19 14.500C19 18 17 19 20 20.800C24 22.500 30 21 30 14.500C32 24 26 24.500 20 23C15 21 14 17 16 13.500C17 12 19 13 19 14.500Z" fill="#e4edf6" />
      </svg>
    ),
  },
  {
    icon: (
      <svg width="30" height="30" viewBox="0 0 30 30">
        <defs><linearGradient id="st" x1="0" y1="0" x2="1" y2="1"><stop stopColor="#0f62a8" /><stop offset="1" stopColor="#22355c" /></linearGradient></defs>
        <path d="M8 7V2.500Q8 1 9.500 1H20.500Q22 1 22 2.500V7" stroke="#20bdf5" strokeWidth="2" fill="none" />
        <path d="M.5 6H29.500V25Q29.500 29.500 25 29.500H5Q.5 29.500 .5 25Z" fill="url(#st)" />
        <path d="M9.500 12H14.500V17H9.500Z" fill="#f25022" /><path d="M15.500 12H20.500V17H15.500Z" fill="#7fba00" />
        <path d="M9.500 18H14.500V23H9.500Z" fill="#00a4ef" /><path d="M15.500 18H20.500V23H15.500Z" fill="#ffb900" />
      </svg>
    ),
  },
  {
    icon: (
      <svg width="30" height="30" viewBox="0 0 30 30">
        <circle cx="15" cy="15" r="14" fill="none" stroke="#0b0b0b" strokeWidth="1.700" />
        <text x="15" y="18.500" textAnchor="middle" textLength="22" lengthAdjust="spacingAndGlyphs" fontFamily="Inter" fontWeight="800" fontSize="9.500" fill="#0b0b0b">DELL</text>
      </svg>
    ),
  },
  {
    icon: (
      <svg width="30" height="30" viewBox="0 0 30 30">
        <path d="M1.500.5 15 7.500 28.500.5V23L15 30 1.500 23ZM8 10.500V19.500L15 23 22 19.500V10.500L15 14.500Z" fill="#c12a2e" fillRule="evenodd" />
      </svg>
    ),
  },
  { run: true, icon: <Chrome />, badge: <span className="flex size-5 items-center justify-center rounded-full bg-[#2f6e22] text-[12px] font-semibold text-[#cfe3c8]">G</span> },
  {
    run: true,
    icon: (
      <svg width="30" height="30" viewBox="0 0 30 30">
        <circle cx="15" cy="15" r="15" fill="#5865f2" />
        <path d="M9.500 9Q12 7.800 12.500 8L13 9.200H17L17.500 8Q18 7.800 20.500 9Q24 14 23.500 20Q21 22 19 22L18 20.500Q15 21.300 12 20.500L11 22Q9 22 6.500 20Q6 14 9.500 9Z" fill="#fff" />
        <circle cx="12" cy="15.800" r="1.900" fill="#5865f2" /><circle cx="18" cy="15.800" r="1.900" fill="#5865f2" />
      </svg>
    ),
    badge: <span className="flex size-[18px] items-center justify-center rounded-full bg-[#f05a5f]"><span className="size-2 rounded-full bg-white" /></span>,
  },
  {
    run: true,
    icon: <Chrome />,
    badge: (
      <span className="flex size-5 items-center justify-center rounded-full border border-[#8aa5c4] bg-[#d3e3fd]">
        <svg width="14" height="14" viewBox="0 0 14 14"><circle cx="7" cy="4" r="3" fill="#0b57d0" /><path d="M1 13C1 7 13 7 13 13Z" fill="#0b57d0" /></svg>
      </span>
    ),
  },
  {
    active: true,
    icon: (
      <svg width="30" height="30" viewBox="0 0 30 30">
        <rect width="30" height="30" rx="3.500" fill="#2a3fbf" />
        <text x="3.500" y="24" textLength="22" lengthAdjust="spacingAndGlyphs" fontFamily="Open Sans" fontWeight="800" fontSize="22" fill="#fff">Ki</text>
        <circle cx="22.500" cy="7.500" r="2.600" fill="#f0640f" />
      </svg>
    ),
  },
];

function Taskbar() {
  return (
    <footer className="flex h-[60px] shrink-0 items-center border-t border-[#b4bcc4] bg-linear-to-r from-[#d5e5f2] via-[#e1ecf8] to-[#d6e2ee] pb-[2px]">
      <div className="flex w-[490px] items-center pl-[27px]">
        <div className="relative h-[34px] w-[37px]">
          <div className="mt-[7px] size-[25px] rounded-full bg-linear-to-br from-[#f2b632] to-[#f4660a]" />
          <div className="absolute top-[-4px] left-[12px] flex size-5 items-center justify-center rounded-full bg-[#c42b1c] text-[12px] text-white">1</div>
        </div>
        <div className="flex flex-col text-[14.5px] leading-[20px] tracking-[-0.1px] text-[#1b1b1b]">
          <span>62°F</span>
          <span className="text-[#5f6771]">Sunny</span>
        </div>
      </div>
      <div className="flex w-[55px] justify-center">
        <svg width="29" height="29" viewBox="0 0 29 29">
          <defs><linearGradient id="win" x1="0" y1="0" x2="1" y2="1"><stop stopColor="#4fcdf8" /><stop offset="1" stopColor="#0168c8" /></linearGradient></defs>
          <path d="M0 1Q0 0 1 0H14V14H0ZM15 0H28Q29 0 29 1V14H15ZM0 15H14V29H1Q0 29 0 28ZM15 15H29V28Q29 29 28 29H15Z" fill="url(#win)" />
        </svg>
      </div>
      <div className="ml-[4px] flex h-[39px] w-[272px] items-center rounded-full border border-[#cfd9e4] border-b-[#b5bec8] bg-[#f5f8fd] pr-[6px] pl-[13px]">
        <svg width="20" height="20" viewBox="0 0 20 20" fill="none">
          <circle cx="8.500" cy="8.500" r="7" stroke="#222" strokeWidth="2" />
          <path d="m13.500 13.500 5 5" stroke="#222" strokeWidth="2.200" />
        </svg>
        <span className="ml-[11px] flex-1 text-[17px] tracking-[-0.4px] text-[#5c6066]">Search</span>
        <svg width="56" height="34" viewBox="0 0 56 34">
          <path d="M0 26Q28 12 56 26L50 31Q28 33 6 31Z" fill="#dcb288" />
          <path d="m4 12 11-3 11-2 2 17-10 1-12 3Z" fill="#3f9a4b" />
          <path d="m6 11 9-1 1 15-8 1ZM16 10l9-3 2 16-10 2Z" fill="#f7f3ea" />
          <path d="m19 16 8-11 3 2-8 11-4 1Z" fill="#f2a93b" />
          <path d="m26 5 1-2 3 2-1 3Z" fill="#e2574c" />
          <path d="M38 7Q38 3 43 3Q49 3 49 7" stroke="#1374de" strokeWidth="2" fill="none" />
          <rect x="35.500" y="6" width="16" height="21" rx="5" fill="#1b86f4" />
          <rect x="37.500" y="16" width="12" height="9" rx="2" fill="#0d5fc9" />
          <path d="M37 24H50" stroke="#9f7bf0" strokeWidth="2" />
        </svg>
      </div>
      <div className="ml-[5.5px] flex">
        {apps.map((a, i) => (
          <div key={i} className="relative flex h-[60px] w-[55px] items-center justify-center">
            {a.active && <div className="absolute top-[6px] left-[4px] h-[48px] w-[47px] rounded-[5px] border border-[#dfe7ef] bg-[#f2f7fd]" />}
            <div className="relative">{a.icon}</div>
            {a.badge && <div className="absolute top-[9px] left-[28px]">{a.badge}</div>}
            {a.run && <div className="absolute bottom-[5px] left-[24px] h-[4px] w-2 rounded-full bg-[#7f868e]" />}
            {a.active && <div className="absolute bottom-[5px] left-[17px] h-[4px] w-5 rounded-full bg-[#0078d4]" />}
          </div>
        ))}
      </div>
      <div className="ml-auto flex items-center pr-[15px]">
        <div className="flex w-[40px] justify-center">
          <svg width="14" height="9" viewBox="0 0 14 9" fill="none"><path d="m1 8 6-6 6 6" stroke="#1b1b1b" strokeWidth="1.700" /></svg>
        </div>
        <div className="flex w-[40px] justify-center">
          <svg width="22" height="22" viewBox="0 0 22 22" fill="none">
            <path d="M1.500 11A9 9 0 0 1 18.500 6M19.500 1V7H13.500M8 20.500 2 15M2 21V15H8" stroke="#1b1b1b" strokeWidth="1.400" />
            <circle cx="15.500" cy="16" r="5" fill="#fb9200" />
          </svg>
        </div>
        <div className="flex w-[40px] justify-center">
          <svg width="20" height="16" viewBox="0 0 20 16" fill="none" stroke="#1b1b1b" strokeWidth="1.500">
            <path d="M1 6Q10-2.500 19 6M3.800 8.800Q10 3 16.200 8.800M6.500 11.600Q10 8.500 13.500 11.600" />
            <circle cx="10" cy="13.800" r="1.300" fill="#1b1b1b" />
          </svg>
        </div>
        <div className="flex w-[20px] justify-center">
          <svg width="20" height="14" viewBox="0 0 20 14" fill="none" stroke="#1b1b1b" strokeWidth="1.200">
            <path d="M1 4.500H4L8.500 1V13L4 9.500H1ZM12.500 4.500 18 10M18 4.500 12.500 10" />
          </svg>
        </div>
        <div className="flex w-[40px] justify-center">
          <svg width="20" height="13" viewBox="0 0 20 13" fill="none">
            <rect x=".8" y=".8" width="16" height="11.400" rx="2.500" stroke="#1b1b1b" strokeWidth="1.300" />
            <rect x="3" y="3" width="11.600" height="7" rx="1" fill="#111" />
            <path d="M18.500 4.500V8.500" stroke="#1b1b1b" strokeWidth="1.600" />
          </svg>
        </div>
        <div className="flex w-[71px] flex-col items-end text-[14.5px] leading-[20px] tracking-[-0.15px] whitespace-nowrap text-[#1b1b1b]">
          <span>6:37 PM</span>
          <span>4/3/2024</span>
        </div>
        <div className="flex w-[40px] justify-center">
          <svg width="17" height="19" viewBox="0 0 17 19"><path d="M8.500 0C13 0 14.500 3.500 14.500 7V12L16.500 15.500H.5L2.500 12V7C2.500 3.500 4 0 8.500 0ZM6 16.500H11Q10.500 18.800 8.500 18.800T6 16.500Z" fill="#0050a0" /></svg>
        </div>
        <div className="flex w-[50px] justify-center">
          <svg width="30" height="30" viewBox="0 0 30 30">
            <defs>
              <linearGradient id="cp1" x1="0" y1="0" x2="0" y2="1"><stop stopColor="#1b6fe0" /><stop offset=".5" stopColor="#23b6a5" /><stop offset="1" stopColor="#e6cf2a" /></linearGradient>
              <linearGradient id="cp2" x1="0" y1="0" x2="0" y2="1"><stop stopColor="#9b57e8" /><stop offset=".6" stopColor="#e8589a" /><stop offset="1" stopColor="#f79a4a" /></linearGradient>
            </defs>
            <path d="M8 1H20Q16 3 14.500 10L12 20H4Q0 20 1 15L4 5Q5 1 8 1Z" fill="url(#cp1)" />
            <path d="M21 9H25Q29 9 28 14L26 22H12Q15 20 17 13Q18 9 21 9Z" fill="url(#cp2)" />
            <path d="M16 1H20Q23 1 24 5L25 9H19Z" fill="#1a50c8" />
            <rect x="6.500" y="20" width="22.500" height="10" rx="2" fill="#fcc419" />
            <text x="9.500" y="28.300" textLength="17" lengthAdjust="spacingAndGlyphs" fontFamily="Open Sans" fontSize="9" fontWeight="800" fill="#1b1b1b">PRE</text>
          </svg>
        </div>
      </div>
    </footer>
  );
}

/* ---------- page ---------- */

export default function App() {
  return (
    <div className="flex h-[1080px] w-[1920px] flex-col overflow-hidden bg-[#f0f0f0] font-['Open_Sans',sans-serif] text-black">
      <header className="flex h-[29px] shrink-0 items-center bg-[#f9f0ee] pl-[2px]">
        <svg width="20" height="20" viewBox="0 0 30 30">
          <PcbTile />
          <rect x="22" y="19" width="5" height="4" fill={O} />
        </svg>
        <span className="ml-[6px] text-[14.5px] tracking-[-0.1px]">*ECE196DEMO — PCB Editor</span>
        <div className="ml-auto flex">
          <div className="flex w-[58px] items-center justify-center"><div className="h-px w-[11px] bg-black" /></div>
          <div className="flex w-[58px] items-center justify-center">
            <svg width="12" height="12" viewBox="0 0 12 12" fill="none" stroke="#000">
              <rect x=".5" y="2.500" width="9" height="9" rx="1.500" />
              <path d="M3 .5H9.500Q11.500.5 11.500 2.500V9" />
            </svg>
          </div>
          <div className="flex w-[60px] items-center justify-center">
            <svg width="13" height="13" viewBox="0 0 13 13" stroke="#000"><path d="m.5.5 12 12M12.500.5l-12 12" /></svg>
          </div>
          <div className="w-[2px]" />
        </div>
      </header>

      <nav className="flex h-[23px] shrink-0 items-center bg-white pt-[2px] pl-[9.5px] text-[14px] tracking-[-0.2px]">
        {menus.map(([a, u, b, w]) => (
          <div key={a + u + b} className={`shrink-0 ${w}`}>
            {a}
            <span className="underline underline-offset-2">{u}</span>
            {b}
          </div>
        ))}
      </nav>

      <div className="flex h-[48px] shrink-0 items-center pl-[4px]">
        {topIcons.map((icon, i) =>
          icon ? (
            <div key={i} className="flex w-[41px] shrink-0 justify-center">{icon}</div>
          ) : (
            <VSep key={i} />
          ),
        )}
      </div>

      <div className="flex h-[42px] shrink-0 items-center pb-[2px] pl-[6px] text-[14px] tracking-[-0.15px]">
        <Combo w="w-[193px]">Track: use netclass width</Combo>
        <div className="ml-[3px] flex size-[38px] items-center justify-center border border-[#0078d7] bg-[#b3d5f3]">
          <Ico>
            <path d="M2.500 0V18Q2.500 26 9 26H21Q27.500 26 27.500 18V0" stroke={G} strokeWidth="2.200" />
            <path d="M9 10.500H21.500M9 14.500H21.500" stroke={G} strokeWidth="1.800" />
            <circle cx="15" cy="26" r="3.500" fill={B} />
          </Ico>
        </div>
        <div className="ml-[1px]"><VSep tall /></div>
        <div className="ml-[2px]"><Combo w="w-[186px]">Via: use netclass sizes</Combo></div>
        <div className="ml-[1px]"><VSep tall /></div>
        <div className="ml-[2px]">
          <Combo w="w-[156px]" dark>
            <span className="flex items-center tracking-[-0.3px]">
              <span className="ml-[4px] size-[11px] border border-black bg-[#d0d2cd]" />
              <span className="ml-[7px]">Edge.Cuts</span>
            </span>
          </Combo>
        </div>
        <svg width="30" height="30" viewBox="0 0 30 30" className="ml-[7px]">
          <path d="M0 0H22L8 30H0Z" fill={CU} />
          <path d="M22 0H30V30H8Z" fill="#4d7fc4" />
          <path d="M22 0 8 30" stroke="#fff" strokeWidth="4" />
          <path d="M22 0 8 30" stroke="#222" strokeWidth="2.500" strokeDasharray="2 2" />
        </svg>
        <div className="ml-[5px]"><VSep tall /></div>
        <div className="ml-[2px]"><Combo w="w-[209px]">0.5000 mm (19.69 mils)</Combo></div>
        <div className="ml-[1px]"><VSep tall /></div>
        <div className="ml-[2px]"><Combo w="w-[120px]">Zoom 5.00</Combo></div>
      </div>

      <div className="flex h-[810px] shrink-0">
        <ToolColumn tools={leftTools} />
        <main className="w-[1600px] shrink-0 border-y border-[#9a9a9a]">
          <Board />
        </main>
        <ToolColumn tools={rightTools} />
        <div className="w-[5px] shrink-0 bg-[#dcdcdc]" />
        <SidePanel />
      </div>

      <section className="flex h-[40px] shrink-0 pl-[14px] text-[14px] leading-[20px] tracking-[-0.2px]">
        <div className="w-[69px]"><div>Pads</div><div>12</div></div>
        <div className="w-[65px]"><div>Vias</div><div>0</div></div>
        <div className="w-[142px]"><div>Track Segments</div><div>0</div></div>
        <div className="w-[68px]"><div>Nets</div><div>4</div></div>
        <div><div>Unrouted</div><div>2</div></div>
      </section>

      <section className="flex h-[28px] shrink-0 border-t border-[#d7d7d7] text-[14.5px] leading-[28px] tracking-[-0.22px] whitespace-pre">
        <div className="w-[585px] border-r border-[#d7d7d7] pl-[2px] tracking-[-0.13px]">File 'C:\Users\garno\OneDrive\Desktop\ECE196DEMO\_autosave-ECE196DEMO.kicad...</div>
        <div className="w-[97px] border-r border-[#d7d7d7] pl-[4px]">Z 5.77</div>
        <div className="w-[203px] border-r border-[#d7d7d7] pl-[4px]">X 148.0000  Y 105.5000</div>
        <div className="w-[321px] border-r border-[#d7d7d7] pl-[4px]">dx 148.0000  dy 105.5000  dist 181.7533</div>
        <div className="w-[234px] border-r border-[#d7d7d7] pl-[4px]">grid 0.5000</div>
        <div className="w-[77px] border-r border-[#d7d7d7] pl-[4px]">mm</div>
        <div className="w-[215px] border-r border-[#d7d7d7] pl-[4px]">Select item(s)</div>
      </section>

      <Taskbar />
    </div>
  );
}
